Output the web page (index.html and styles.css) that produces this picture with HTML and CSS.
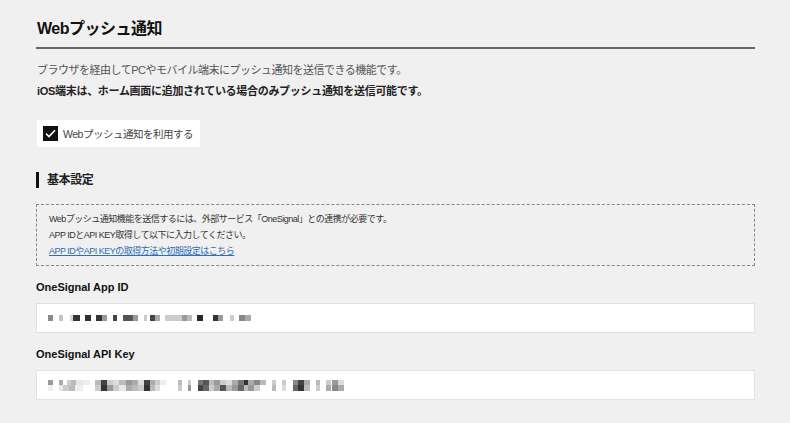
FILE: index.html
```html
<!DOCTYPE html>
<html lang="ja">
<head>
    <meta charset="UTF-8">
    <meta name="viewport" content="width=device-width, initial-scale=1.0">
    <title>Webプッシュ通知</title>
    <link rel="stylesheet" href="styles.css">
</head>
<body>
    <div class="page">
        <h1 class="page-title">Webプッシュ通知</h1>

        <p class="lead">ブラウザを経由してPCやモバイル端末にプッシュ通知を送信できる機能です。</p>
        <p class="lead strong">iOS端末は、ホーム画面に追加されている場合のみプッシュ通知を送信可能です。</p>

        <label class="toggle">
            <span class="check">
                <svg width="11" height="9" viewBox="0 0 11 9"><path d="M1 4.6 L4 7.6 L10 1.2" fill="none" stroke="#fff" stroke-width="1.6"/></svg>
            </span>
            <span class="toggle-text">Webプッシュ通知を利用する</span>
        </label>

        <h2 class="section-title">基本設定</h2>

        <div class="notice">
            <div>Webプッシュ通知機能を送信するには、外部サービス「OneSignal」との連携が必要です。</div>
            <div>APP IDとAPI KEY取得して以下に入力してください。</div>
            <div><a href="#" class="notice-link">APP IDやAPI KEYの取得方法や初期設定はこちら</a></div>
        </div>

        <div class="field-label">OneSignal App ID</div>
        <div class="field">
            <div class="mosaic app-id"></div>
        </div>

        <div class="field-label">OneSignal API Key</div>
        <div class="field">
            <div class="mosaic api-key"></div>
        </div>
    </div>
</body>
</html>
```

FILE: styles.css
```css
body {
    margin: 0;
    background-color: #f0f0f0;
    color: #333;
    font-family: "Liberation Sans", "Noto Sans CJK JP", sans-serif;
}

.page {
    width: 719px;
    margin-left: 36px;
}

.page-title {
    margin: 0;
    padding: 17px 0 6px 1px;
    font-size: 16px;
    line-height: 24px;
    color: #111;
    border-bottom: 2px solid #666;
    letter-spacing: -0.5px;
}

.lead {
    margin: 0;
    padding-left: 1px;
    font-size: 11px;
    line-height: 21px;
    color: #555;
    letter-spacing: -0.5px;
}

.page-title + .lead {
    margin-top: 11px;
}

.lead.strong {
    font-weight: bold;
    color: #222;
    letter-spacing: -0.3px;
}

.toggle {
    display: inline-flex;
    align-items: center;
    gap: 5px;
    margin: 18px 0 0 1px;
    height: 27px;
    padding: 0 7px 0 6px;
    background-color: #fff;
    font-size: 10.5px;
    color: #444;
    letter-spacing: -0.5px;
}

.check {
    width: 15px;
    height: 15px;
    background-color: #111;
    display: flex;
    align-items: center;
    justify-content: center;
}

.section-title {
    margin: 25px 0 0;
    padding-left: 8px;
    border-left: 3px solid #111;
    font-size: 12px;
    line-height: 16px;
    color: #222;
    letter-spacing: -0.4px;
}

.notice {
    margin-top: 16px;
    padding: 6px 12px;
    border: 1px dashed #888;
    font-size: 9px;
    line-height: 16px;
    color: #333;
    letter-spacing: -0.5px;
}

.notice-link {
    color: #2f6eb5;
}

.field-label {
    margin: 13px 0 8px;
    font-size: 11px;
    line-height: 16px;
    font-weight: bold;
    color: #111;
}

.field {
    height: 30px;
    box-sizing: border-box;
    border: 1px solid #e2e2e2;
    background-color: #fff;
    padding: 0 11px;
    display: flex;
    align-items: center;
}

.mosaic.app-id {
    width: 203px;
    height: 6px;
    background: linear-gradient(to right,
        #8a8a8a 0 5px, transparent 5px 11px, #c4c4c4 11px 15px, transparent 15px 22px,
        #d8d8d8 22px 25px, #333 25px 32px, transparent 32px 37px, #2e2e2e 37px 43px,
        transparent 43px 48px, #333 48px 54px, #999 54px 59px, transparent 59px 65px,
        #444 65px 69px, transparent 69px 75px, #555 75px 85px, #999 85px 90px,
        transparent 90px 96px, #ccc 96px 99px, transparent 99px 102px, #444 102px 107px,
        #aaa 107px 112px, transparent 112px 117px, #ccc 117px 134px, #999 134px 139px,
        #bbb 139px 144px, transparent 144px 149px, #2a2a2a 149px 155px, transparent 155px 165px,
        #333 165px 170px, #999 170px 175px, transparent 175px 182px, #ccc 182px 186px,
        transparent 186px 191px, #888 191px 197px, #aaa 197px 203px);
}

.mosaic.api-key {
    width: 296px;
    height: 11px;
    background:
        linear-gradient(to right,
            #999 0 5px, transparent 5px 11px, #aaa 11px 15px, transparent 15px 19px,
            #ccc 19px 23px, #bbb 23px 28px, #e6e6e6 28px 35px, #eee 35px 42px,
            transparent 42px 47px, #bbb 47px 53px, #444 53px 59px, #ccc 59px 65px,
            #ddd 65px 71px, #bbb 71px 78px, #999 78px 84px, #aaa 84px 90px,
            #ddd 90px 96px, #444 96px 102px, #aaa 102px 107px, #ccc 107px 112px,
            #eee 112px 118px, transparent 118px 130px, #bbb 130px 134px, transparent 134px 140px,
            #ccc 140px 143px, transparent 143px 150px, #777 150px 155px, #555 155px 161px,
            #bbb 161px 166px, #999 166px 172px, #ccc 172px 178px, #ddd 178px 184px,
            #aaa 184px 190px, #777 190px 196px, #333 196px 200px, #aaa 200px 206px,
            #888 206px 212px, #bbb 212px 218px, transparent 218px 224px, #ccc 224px 228px,
            transparent 228px 234px, #ccc 234px 238px, transparent 238px 245px, #888 245px 250px,
            #444 250px 256px, #aaa 256px 262px, transparent 262px 268px, #bbb 268px 272px,
            transparent 272px 278px, #ccc 278px 283px, transparent 283px 284px, #999 284px 290px,
            #ddd 290px 296px) top / 100% 5px no-repeat,
        linear-gradient(to right,
            #eee 0 5px, transparent 5px 11px, #e6e6e6 11px 15px, #ccc 15px 21px,
            #bbb 21px 27px, #eee 27px 35px, transparent 35px 47px, #ccc 47px 53px,
            #333 53px 59px, #999 59px 65px, #ccc 65px 71px, #e6e6e6 71px 78px,
            #aaa 78px 84px, #bbb 84px 90px, #ccc 90px 96px, #333 96px 102px,
            #bbb 102px 107px, #ddd 107px 112px, transparent 112px 130px, #ccc 130px 134px,
            transparent 134px 140px, #999 140px 143px, transparent 143px 150px, #444 150px 155px,
            #666 155px 161px, #ccc 161px 166px, #aaa 166px 172px, #555 172px 178px,
            #bbb 178px 184px, #999 184px 190px, #666 190px 196px, #bbb 196px 200px,
            #999 200px 206px, #ccc 206px 212px, transparent 212px 224px, #bbb 224px 228px,
            transparent 228px 234px, #ddd 234px 238px, transparent 238px 245px, #666 245px 250px,
            #333 250px 256px, #bbb 256px 262px, transparent 262px 268px, #ccc 268px 272px,
            transparent 272px 278px, #aaa 278px 283px, transparent 283px 284px, #888 284px 290px,
            #aaa 290px 296px) bottom / 100% 6px no-repeat;
}
```
